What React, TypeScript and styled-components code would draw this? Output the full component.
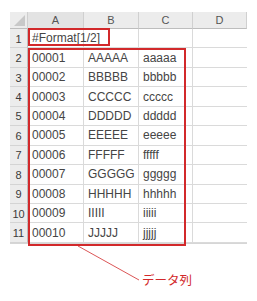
import React from "react";
import styled, { createGlobalStyle } from "styled-components";

const GlobalStyle = createGlobalStyle`
  html, body {
    margin: 0;
    padding: 0;
    background: #ffffff;
  }
  body {
    font-family: "Liberation Sans", Arial, sans-serif;
  }
`;

const RED = "#d2292b";

const Page = styled.div`
  position: relative;
  width: 257px;
  height: 301px;
  padding: 12px 0 0 10px;
  box-sizing: border-box;
  overflow: hidden;
`;

const Sheet = styled.div`
  display: grid;
  grid-template-columns: 18px 56px 55px 54px 54px;
  grid-template-rows: 17px repeat(11, 19.45px);
  border-bottom: 1px solid #d6d6d6;
  width: max-content;
`;

const Corner = styled.div`
  position: relative;
  background: #ececec;
  border-right: 1px solid #cfcfcf;
  border-bottom: 1px solid #bdbdbd;
  box-sizing: border-box;

  &::after {
    content: "";
    position: absolute;
    right: 2px;
    bottom: 2px;
    width: 0;
    height: 0;
    border-left: 11px solid transparent;
    border-bottom: 11px solid #c8c8c8;
  }
`;

const ColHeader = styled.div<{ $active?: boolean }>`
  display: flex;
  align-items: center;
  justify-content: center;
  background: ${(p) => (p.$active ? "#e3e3e3" : "#ececec")};
  border-right: 1px solid #d0d0d0;
  border-bottom: 1px solid #bdbdbd;
  box-sizing: border-box;
  font-size: 11px;
  color: #555555;
`;

const RowHeader = styled.div`
  display: flex;
  align-items: center;
  justify-content: center;
  background: #ececec;
  border-right: 1px solid #bdbdbd;
  border-bottom: 1px solid #d4d4d4;
  box-sizing: border-box;
  font-size: 11px;
  color: #3a3a3a;
  padding-top: 1px;
`;

const Cell = styled.div<{ $last?: boolean }>`
  display: flex;
  align-items: center;
  padding: 0 0 0 4px;
  border-right: ${(p) => (p.$last ? "none" : "1px solid #dadada")};
  border-bottom: 1px solid #dadada;
  box-sizing: border-box;
  font-size: 12px;
  color: #454545;
  white-space: nowrap;
  overflow: visible;
`;

const Highlight = styled.div<{ $x: number; $y: number; $w: number; $h: number }>`
  position: absolute;
  left: ${(p) => p.$x}px;
  top: ${(p) => p.$y}px;
  width: ${(p) => p.$w}px;
  height: ${(p) => p.$h}px;
  border: 2.5px solid ${RED};
  box-sizing: border-box;
  pointer-events: none;
`;

const Leader = styled.svg`
  position: absolute;
  left: 0;
  top: 0;
  pointer-events: none;
`;

const CalloutLabel = styled.span`
  position: absolute;
  left: 142px;
  top: 274px;
  font-family: "Noto Sans CJK JP", "Noto Sans", sans-serif;
  font-size: 12.5px;
  line-height: 1;
  color: ${RED};
`;

const rows: [string, string, string][] = [
  ["00001", "AAAAA", "aaaaa"],
  ["00002", "BBBBB", "bbbbb"],
  ["00003", "CCCCC", "ccccc"],
  ["00004", "DDDDD", "ddddd"],
  ["00005", "EEEEE", "eeeee"],
  ["00006", "FFFFF", "fffff"],
  ["00007", "GGGGG", "ggggg"],
  ["00008", "HHHHH", "hhhhh"],
  ["00009", "IIIII", "iiiii"],
  ["00010", "JJJJJ", "jjjjj"],
];

export default function App() {
  return (
    <>
      <GlobalStyle />
      <Page>
        <Sheet>
          <Corner />
          <ColHeader $active>A</ColHeader>
          <ColHeader>B</ColHeader>
          <ColHeader>C</ColHeader>
          <ColHeader>D</ColHeader>

          <RowHeader>1</RowHeader>
          <Cell>#Format[1/2]</Cell>
          <Cell />
          <Cell />
          <Cell $last />

          {rows.map((r, i) => (
            <React.Fragment key={r[0]}>
              <RowHeader>{i + 2}</RowHeader>
              <Cell>{r[0]}</Cell>
              <Cell>{r[1]}</Cell>
              <Cell>{r[2]}</Cell>
              <Cell $last />
            </React.Fragment>
          ))}
        </Sheet>

        <Highlight $x={28} $y={28} $w={82} $h={18} />
        <Highlight $x={28} $y={48} $w={158} $h={198} />

        <Leader width="257" height="301">
          <line x1="78" y1="246" x2="139" y2="280" stroke={RED} strokeWidth="0.8" />
        </Leader>
        <CalloutLabel>データ列</CalloutLabel>
      </Page>
    </>
  );
}
